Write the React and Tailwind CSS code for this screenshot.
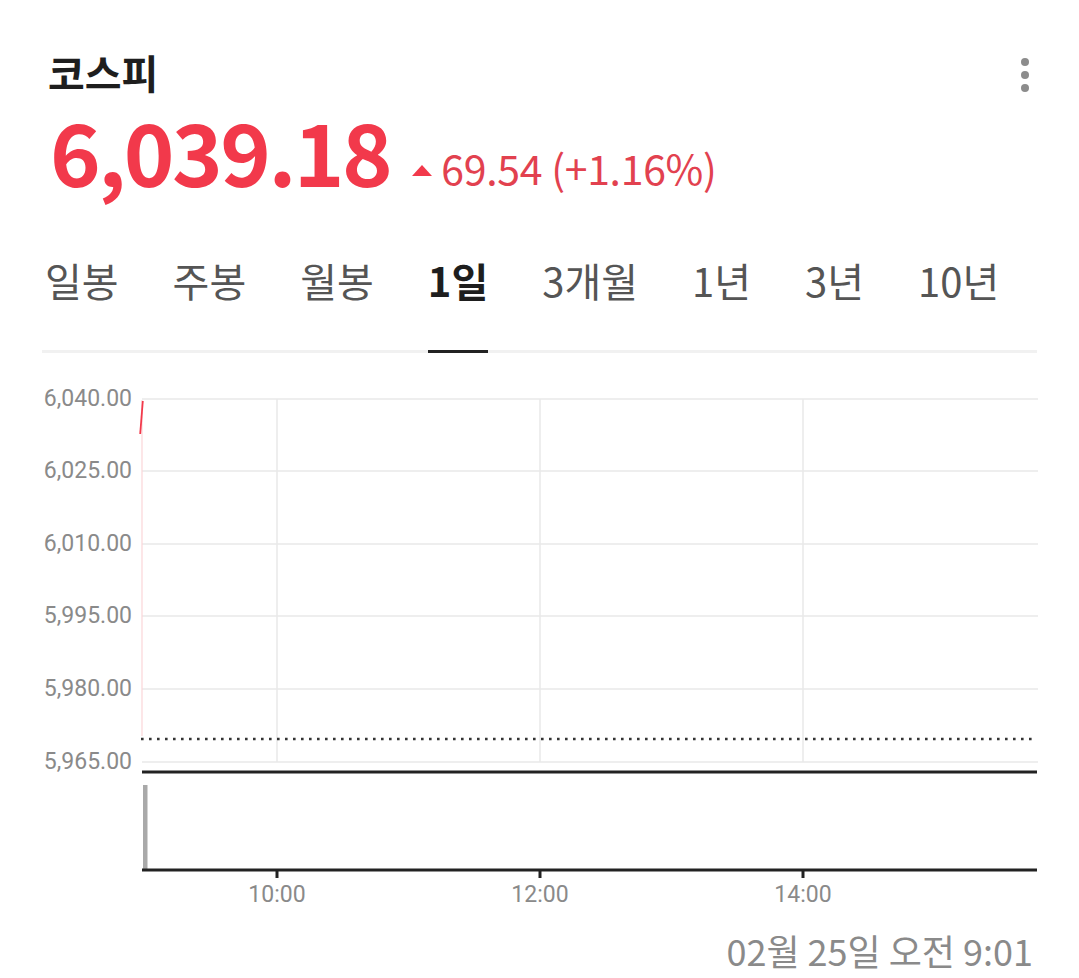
import React from 'react';

const FONT = { fontFamily: '"Noto Sans CJK KR", "Noto Sans", sans-serif' };
const ROBOTO = '"Roboto", "Liberation Sans", sans-serif';

const tabs = ['일봉', '주봉', '월봉', '1일', '3개월', '1년', '3년', '10년'];

const yLabels = [
    { v: '6,040.00', y: 399 },
    { v: '6,025.00', y: 471 },
    { v: '6,010.00', y: 544 },
    { v: '5,995.00', y: 616 },
    { v: '5,980.00', y: 689 },
    { v: '5,965.00', y: 762 },
];

const xTicks = [
    { t: '10:00', x: 277 },
    { t: '12:00', x: 540 },
    { t: '14:00', x: 803 },
];

// chart coordinates are page coordinates shifted up by TOP
const TOP = 380;

const Chart = () => (
    <svg width="1079" height="530" viewBox={`0 ${TOP} 1079 530`} className="block">
        {yLabels.map(l => (
            <g key={l.v}>
                <line x1="142" x2="1038" y1={l.y} y2={l.y} stroke="#e9e9e9" strokeWidth="1.5" />
                <text x="132" y={l.y + 7} textAnchor="end" fontSize="23" fill="#8a8a8a" fontFamily={ROBOTO}>{l.v}</text>
            </g>
        ))}
        {xTicks.map(t => (
            <line key={t.t} x1={t.x} x2={t.x} y1="399" y2="762" stroke="#e9e9e9" strokeWidth="1.5" />
        ))}
        <line x1="142" x2="142" y1="400" y2="736" stroke="#fbd5d8" strokeWidth="1.2" />
        <line x1="142.8" y1="401" x2="140.2" y2="434" stroke="#f2394b" strokeWidth="1.8" />
        <line x1="141" x2="1034" y1="739" y2="739" stroke="#333" strokeWidth="2.6" strokeDasharray="2.6 5.4" />
        <line x1="142" x2="1037" y1="772" y2="772" stroke="#222" strokeWidth="3" />
        <rect x="143" y="785" width="4.5" height="85" fill="#a9a9a9" />
        <line x1="142" x2="1037" y1="870" y2="870" stroke="#222" strokeWidth="3" />
        {xTicks.map(t => (
            <g key={t.t + 'tick'}>
                <line x1={t.x} x2={t.x} y1="870" y2="878" stroke="#222" strokeWidth="3" />
                <text x={t.x} y="902" textAnchor="middle" fontSize="23" fill="#8a8a8a" fontFamily={ROBOTO}>{t.t}</text>
            </g>
        ))}
    </svg>
);

const App = () => {
    return (
        <div className="w-[1079px] h-[978px] bg-white overflow-hidden flex flex-col" style={FONT}>
            <div className="px-[48px] pt-[52px]">
                <div className="flex items-start justify-between">
                    <h1 className="text-[40px] leading-[40px] font-bold text-[#1e1e1e]">코스피</h1>
                    <div className="flex flex-col gap-[5px] mt-[6px] mr-[2px]">
                        <span className="w-[8px] h-[8px] rounded-full bg-[#8c8c8c]" />
                        <span className="w-[8px] h-[8px] rounded-full bg-[#8c8c8c]" />
                        <span className="w-[8px] h-[8px] rounded-full bg-[#8c8c8c]" />
                    </div>
                </div>
                <div className="flex items-end mt-[25px] ml-[2px]">
                    <span className="text-[86px] leading-[66px] font-bold text-[#f2394b] tracking-[-2.5px]">6,039.18</span>
                    <span className="ml-[22px] mb-[7px] w-0 h-0 border-l-[10px] border-r-[10px] border-b-[11px] border-l-transparent border-r-transparent border-b-[#f2394b]" />
                    <span className="ml-[9px] text-[41px] leading-[41px] tracking-[-0.3px] text-[#e2414f] -mb-[5px]">69.54 (+1.16%)</span>
                </div>
            </div>
            <div className="mx-[42px] mt-[73px] pl-[3px] flex gap-[54px] border-b-[3px] border-[#f1f1f1]">
                {tabs.map(t => (
                    <div
                        key={t}
                        className={`text-[40px] leading-[48px] pb-[46px] -mb-[3px] border-b-[3px] ${t === '1일' ? 'font-bold text-[#1e1e1e] border-[#222]' : 'text-[#555] border-transparent'}`}
                    >
                        {t}
                    </div>
                ))}
            </div>
            <div className="mt-[27px]">
                <Chart />
            </div>
            <div className="px-[46px] mt-[20px] flex justify-end">
                <span className="text-[36px] leading-[40px] text-[#8a8a8a]">02월 25일 오전 9:01</span>
            </div>
        </div>
    );
};

export default App;
